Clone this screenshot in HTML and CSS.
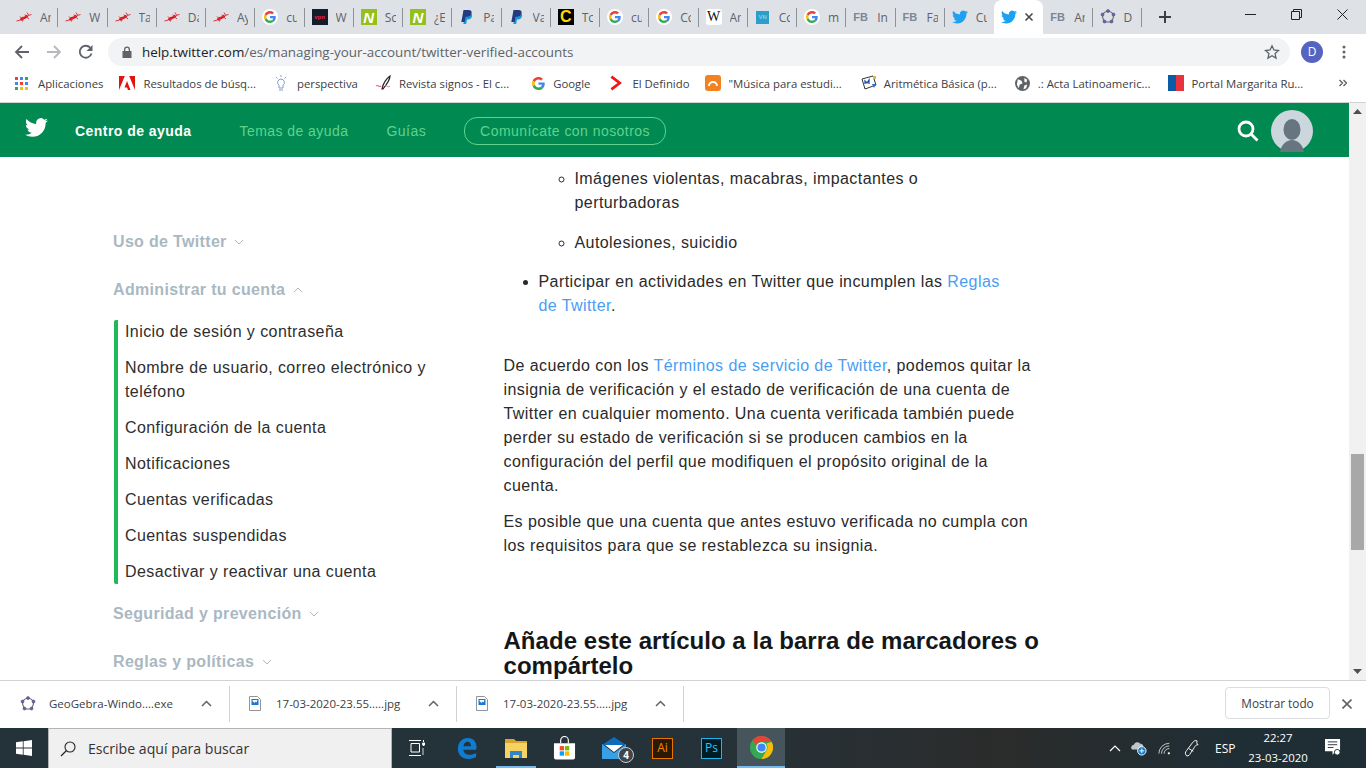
FILE: index.html
```html
<!DOCTYPE html>
<html lang="es">
<head>
    <meta charset="UTF-8">
    <meta name="viewport" content="width=device-width, initial-scale=1.0">
    <title>Cuentas verificadas</title>
    <link rel="stylesheet" href="styles.css">
</head>
<body>
    <svg class="defs" width="0" height="0">
        <symbol id="bird" viewBox="0 0 24 24"><path d="M23.953 4.57a10 10 0 01-2.825.775 4.958 4.958 0 002.163-2.723c-.951.555-2.005.959-3.127 1.184a4.92 4.92 0 00-8.384 4.482C7.69 8.095 4.067 6.13 1.64 3.162a4.822 4.822 0 00-.666 2.475c0 1.71.87 3.213 2.188 4.096a4.904 4.904 0 01-2.228-.616v.06a4.923 4.923 0 003.946 4.827 4.996 4.996 0 01-2.212.085 4.936 4.936 0 004.604 3.417 9.867 9.867 0 01-6.102 2.105c-.39 0-.779-.023-1.17-.067a13.995 13.995 0 007.557 2.209c9.053 0 13.998-7.496 13.998-13.985 0-.21 0-.42-.015-.63A9.935 9.935 0 0024 4.59z"/></symbol>
        <symbol id="gcolor" viewBox="0 0 48 48">
            <path fill="#ea4335" d="M24 9.5c3.54 0 6.71 1.22 9.21 3.6l6.85-6.85C35.9 2.38 30.47 0 24 0 14.62 0 6.51 5.38 2.56 13.22l7.98 6.19C12.43 13.72 17.74 9.5 24 9.5z"/>
            <path fill="#4285f4" d="M46.98 24.55c0-1.57-.15-3.09-.38-4.55H24v9.02h12.94c-.58 2.96-2.26 5.48-4.78 7.18l7.73 6c4.51-4.18 7.09-10.36 7.09-17.65z"/>
            <path fill="#fbbc05" d="M10.53 28.59c-.48-1.45-.76-2.99-.76-4.59s.27-3.14.76-4.59l-7.98-6.19C.92 16.46 0 20.12 0 24c0 3.88.92 7.54 2.56 10.78l7.97-6.19z"/>
            <path fill="#34a853" d="M24 48c6.48 0 11.93-2.13 15.89-5.81l-7.73-6c-2.15 1.45-4.92 2.3-8.16 2.3-6.26 0-11.57-4.22-13.47-9.91l-7.98 6.19C6.51 42.62 14.62 48 24 48z"/>
        </symbol>
        <symbol id="ant" viewBox="0 0 16 16">
            <path d="M4.500 11C5.500 10 6 9.500 7.500 9s2.500-.5 4-2.500" fill="none" stroke="#d8141c" stroke-width="2.400"/>
            <path d="M.5 12l4-1M4 7.500l2.500 2.500M6.500 12.500l1-4M9 5.500l1 2.500M13 10l-3-2.500M12 6.500l3.500-1M11 3.500l1.500 2.500" fill="none" stroke="#e0343a" stroke-width="1"/>
        </symbol>
        <symbol id="paypal" viewBox="0 0 16 16">
            <path fill="#179bd7" d="M6.500 5h6.200c1.200 1.800-.3 5.400-3.300 5.400H8L7.200 15H4.300z"/>
            <path fill="#253b80" d="M4.500 1h5c2.500 0 3.700 1.300 3 3.500-.6 2.400-2.500 3.300-4.500 3.300H6.500L5.700 13H2.300z"/>
        </symbol>
        <symbol id="geo" viewBox="0 0 16 16">
            <path d="M8 2c2 .3 4 1.300 5.500 3.500.3 2.500-.7 5-2 7-2.300.7-4.700.7-7 0-1.300-2-2.300-4.500-2-7C4 3.300 6 2.300 8 2z" fill="none" stroke="#666" stroke-width="1.100"/>
            <g fill="#6f63c4" stroke="#3d3d55" stroke-width=".5"><circle cx="8" cy="2" r="1.500"/><circle cx="13.500" cy="5.500" r="1.500"/><circle cx="11.500" cy="12.500" r="1.500"/><circle cx="4.500" cy="12.500" r="1.500"/><circle cx="2.500" cy="5.500" r="1.500"/></g>
        </symbol>
        <symbol id="jpgfile" viewBox="0 0 12 15">
            <path d="M.5.500h8l3 3v11H.5z" fill="#fff" stroke="#8f959b"/>
            <path d="M2.500 3h7v6h-7z" fill="#1976d2"/>
            <path d="M3.500 4h5l-1 2.500-1-1-.8 2-.7-2-1 1z" fill="#fff"/>
        </symbol>
    </svg>

    <!-- pestañas -->
    <div class="tabstrip">
        <div class="tab"><svg class="fav"><use href="#ant"/></svg><span class="tab-title">Ar</span></div>
        <div class="tab"><svg class="fav"><use href="#ant"/></svg><span class="tab-title">W</span></div>
        <div class="tab"><svg class="fav"><use href="#ant"/></svg><span class="tab-title">Ta</span></div>
        <div class="tab"><svg class="fav"><use href="#ant"/></svg><span class="tab-title">Da</span></div>
        <div class="tab"><svg class="fav"><use href="#ant"/></svg><span class="tab-title">Ay</span></div>
        <div class="tab"><span class="fav-g"><svg width="12" height="12"><use href="#gcolor"/></svg></span><span class="tab-title">cu</span></div>
        <div class="tab"><span class="fav-box fav-dark">vpn</span><span class="tab-title">W</span></div>
        <div class="tab"><span class="fav-box fav-n">N</span><span class="tab-title">Sc</span></div>
        <div class="tab"><span class="fav-box fav-n">N</span><span class="tab-title">¿E</span></div>
        <div class="tab"><svg class="fav"><use href="#paypal"/></svg><span class="tab-title">Pa</span></div>
        <div class="tab"><svg class="fav"><use href="#paypal"/></svg><span class="tab-title">Va</span></div>
        <div class="tab"><span class="fav-box fav-c">C</span><span class="tab-title">Tc</span></div>
        <div class="tab"><span class="fav-g"><svg width="12" height="12"><use href="#gcolor"/></svg></span><span class="tab-title">cu</span></div>
        <div class="tab"><span class="fav-g"><svg width="12" height="12"><use href="#gcolor"/></svg></span><span class="tab-title">Cc</span></div>
        <div class="tab"><span class="fav-box fav-w">W</span><span class="tab-title">Ar</span></div>
        <div class="tab"><span class="fav-box fav-vn">VN</span><span class="tab-title">Cc</span></div>
        <div class="tab"><span class="fav-g"><svg width="12" height="12"><use href="#gcolor"/></svg></span><span class="tab-title">m</span></div>
        <div class="tab"><span class="fav-fb">FB</span><span class="tab-title">In</span></div>
        <div class="tab"><span class="fav-fb">FB</span><span class="tab-title">Fa</span></div>
        <div class="tab tab-before-active"><svg class="fav fav-bird"><use href="#bird"/></svg><span class="tab-title">Cu</span></div>
        <div class="tab tab-active"><svg class="fav fav-bird"><use href="#bird"/></svg><svg class="tab-close" width="10" height="10" viewBox="0 0 10 10"><path d="M1.500 1.500l7 7M8.500 1.500l-7 7" stroke="#45494d" stroke-width="1.600"/></svg></div>
        <div class="tab"><span class="fav-fb">FB</span><span class="tab-title">Ar</span></div>
        <div class="tab"><svg class="fav"><use href="#geo"/></svg><span class="tab-title">D</span></div>
        <svg class="newtab" width="12" height="12" viewBox="0 0 12 12"><path d="M6 0v12M0 6h12" stroke="#3c4043" stroke-width="2"/></svg>
        <div class="winbtns">
            <svg width="11" height="11" viewBox="0 0 11 11"><path d="M0 5.500h11" stroke="#222"/></svg>
            <svg width="11" height="11" viewBox="0 0 11 11"><path d="M.5 2.500h8v8h-8zM2.500 2.500v-2h8v8h-2" fill="none" stroke="#222"/></svg>
            <svg width="11" height="11" viewBox="0 0 11 11"><path d="M.5.500l10 10M10.500.500l-10 10" stroke="#222"/></svg>
        </div>
    </div>

    <!-- barra de direcciones -->
    <div class="toolbar">
        <svg width="16" height="16" viewBox="0 0 16 16"><path d="M15 8H2M8 2L2 8l6 6" fill="none" stroke="#5f6368" stroke-width="1.800"/></svg>
        <svg width="16" height="16" viewBox="0 0 16 16"><path d="M1 8h13M8 2l6 6-6 6" fill="none" stroke="#b5b8bc" stroke-width="1.800"/></svg>
        <svg width="16" height="16" viewBox="0 0 16 16"><path d="M13.500 9.500A6 6 0 1 1 12.200 3.700" fill="none" stroke="#5f6368" stroke-width="1.800"/><path d="M14.500 1v6h-6z" fill="#5f6368"/></svg>
        <div class="omnibox">
            <svg width="10" height="12" viewBox="0 0 10 12"><path d="M2 5V3.500a3 3 0 0 1 6 0V5h1.500v7H.5V5z" fill="#5f6368"/><path d="M3.300 5V3.500a1.700 1.700 0 0 1 3.400 0V5z" fill="#f1f3f4"/></svg>
            <span class="url"><b>help.twitter.com</b>/es/managing-your-account/twitter-verified-accounts</span>
            <svg class="star" width="16" height="16" viewBox="0 0 16 16"><path d="M8 1.800l1.900 4.200 4.600.5-3.400 3.100.9 4.500L8 11.800l-4 2.300.9-4.500-3.400-3.100 4.600-.5z" fill="none" stroke="#5f6368" stroke-width="1.300"/></svg>
        </div>
        <span class="profile">D</span>
        <svg class="menu-dots" width="4" height="14" viewBox="0 0 4 14"><g fill="#5f6368"><circle cx="2" cy="2" r="1.500"/><circle cx="2" cy="7" r="1.500"/><circle cx="2" cy="12" r="1.500"/></g></svg>
    </div>

    <!-- marcadores -->
    <div class="bookmarks">
        <div class="bm bm-apps">
            <svg width="13" height="13" viewBox="0 0 13 13">
                <g fill="#ea4335"><rect width="3" height="3"/><rect x="5" y="5" width="3" height="3"/></g>
                <g fill="#4285f4"><rect x="5" width="3" height="3"/><rect y="5" width="3" height="3"/><rect x="10" y="5" width="3" height="3"/></g>
                <g fill="#34a853"><rect x="10" width="3" height="3"/><rect y="10" width="3" height="3"/></g>
                <g fill="#fbbc05"><rect x="5" y="10" width="3" height="3"/><rect x="10" y="10" width="3" height="3"/></g>
            </svg>Aplicaciones
        </div>
        <div class="bm bm-res">
            <svg width="16" height="16" viewBox="0 0 16 16"><path d="M0 1h5.800L0 15zM10.200 1H16v14zM8 6l3.500 9H9L8 12.500H5.500z" fill="#e1150f"/></svg>Resultados de búsq...
        </div>
        <div class="bm bm-per">
            <svg width="14" height="16" viewBox="0 0 14 16"><path d="M7 4a3.500 3.500 0 0 1 2 6.300V13H5v-2.700A3.500 3.500 0 0 1 7 4zM5 15h4M2 2l1.500 1.500M12 2l-1.500 1.500M7 0v2" fill="none" stroke="#7f9fc9"/></svg>perspectiva
        </div>
        <div class="bm bm-rev">
            <svg width="16" height="16" viewBox="0 0 16 16"><path d="M7 14C8 9 11 4 15 1c0 4-3 8-7 13z" fill="none" stroke="#222" stroke-width="1.200"/><path d="M1 11c2-2 3 2 5 0" fill="none" stroke="#d9707a" stroke-width="1.200"/><path d="M10 11c2-1 3 2 5 0" fill="none" stroke="#d9707a"/></svg>Revista signos - El c...
        </div>
        <div class="bm bm-goo">
            <svg width="13" height="13"><use href="#gcolor"/></svg>Google
        </div>
        <div class="bm bm-def">
            <svg width="12" height="16" viewBox="0 0 13 16"><path d="M1.500 1l9 7-9 7" fill="none" stroke="#f01616" stroke-width="3"/></svg>El Definido
        </div>
        <div class="bm bm-mus">
            <span class="bm-orange"><svg width="12" height="12" viewBox="0 0 12 12"><path d="M2 9a4 4 0 1 1 8 0" fill="none" stroke="#fff" stroke-width="2"/></svg></span>"Música para estudi...
        </div>
        <div class="bm bm-ari">
            <svg width="18" height="16" viewBox="0 0 18 16"><path d="M2 4l11-3 3 9-11 4z" fill="#fff" stroke="#333"/><path d="M5 9V6l2 2 2-3v4" fill="none" stroke="#2150a0" stroke-width="1.300"/><path d="M12 9h4l-2 4z" fill="#2b6cd1"/><path d="M13 1h3v3h-3z" fill="#d9b64a"/></svg>Aritmética Básica (p...
        </div>
        <div class="bm bm-act">
            <svg width="15" height="15" viewBox="0 0 16 16"><circle cx="8" cy="8" r="8" fill="#5f6368"/><path d="M3 3.500l4 1.500 1 3-3 1-1 4-2-4zM10 2l3 2-1 3-2-1zM10 10l3-1-1 4-3 1z" fill="#fff"/></svg>.: Acta Latinoameric...
        </div>
        <div class="bm bm-por">
            <span class="bm-flag"></span>Portal Margarita Ru...
        </div>
        <svg class="bm-more" width="8" height="8" viewBox="0 0 8 8"><path d="M.5 1L3.500 4 .5 7M4.500 1l3 3-3 3" fill="none" stroke="#5f6368" stroke-width="1.400"/></svg>
    </div>

    <!-- contenido de la página -->
    <div class="viewport">
        <div class="page">
            <header class="site-nav">
                <svg class="nav-bird" width="23" height="23"><use href="#bird"/></svg>
                <a class="nav-home">Centro de ayuda</a>
                <a class="nav-link nav-topics">Temas de ayuda</a>
                <a class="nav-link nav-guides">Guías</a>
                <a class="nav-pill">Comunícate con nosotros</a>
                <svg class="nav-search" width="22" height="22" viewBox="0 0 22 22"><circle cx="9" cy="9" r="7" fill="none" stroke="#fff" stroke-width="2.800"/><path d="M14 14l6.500 6.500" stroke="#fff" stroke-width="2.800"/></svg>
                <svg class="nav-avatar" width="42" height="42" viewBox="0 0 42 42"><circle cx="21" cy="21" r="21" fill="#ccd6dd"/><ellipse cx="21" cy="19.500" rx="8.500" ry="10.500" fill="#66757f"/><path d="M9 42c1-7 6-12 12-12s11 5 12 12a21 21 0 0 1-24 0z" fill="#66757f"/></svg>
            </header>

            <div class="columns">
                <aside class="sidebar">
                    <h4 class="side-title">Uso de Twitter <svg width="10" height="6" viewBox="0 0 10 6"><path d="M1 1l4 4 4-4" fill="none" stroke="#aab8c2"/></svg></h4>
                    <h4 class="side-title">Administrar tu cuenta <svg width="10" height="6" viewBox="0 0 10 6"><path d="M1 5l4-4 4 4" fill="none" stroke="#aab8c2"/></svg></h4>
                    <ul class="side-list">
                        <li>Inicio de sesión y contraseña</li>
                        <li>Nombre de usuario, correo electrónico y teléfono</li>
                        <li>Configuración de la cuenta</li>
                        <li>Notificaciones</li>
                        <li>Cuentas verificadas</li>
                        <li>Cuentas suspendidas</li>
                        <li>Desactivar y reactivar una cuenta</li>
                    </ul>
                    <h4 class="side-title side-after">Seguridad y prevención <svg width="10" height="6" viewBox="0 0 10 6"><path d="M1 1l4 4 4-4" fill="none" stroke="#aab8c2"/></svg></h4>
                    <h4 class="side-title">Reglas y políticas <svg width="10" height="6" viewBox="0 0 10 6"><path d="M1 1l4 4 4-4" fill="none" stroke="#aab8c2"/></svg></h4>
                </aside>

                <main class="article">
                    <ul class="outer">
                        <li class="no-mark">
                            <ul class="inner">
                                <li>Imágenes violentas, macabras, impactantes o perturbadoras</li>
                                <li>Autolesiones, suicidio</li>
                            </ul>
                        </li>
                        <li>Participar en actividades en Twitter que incumplen las <a>Reglas de Twitter</a>.</li>
                    </ul>
                    <p class="para-first">De acuerdo con los <a>Términos de servicio de Twitter</a>, podemos quitar la insignia de verificación y el estado de verificación de una cuenta de Twitter en cualquier momento. Una cuenta verificada también puede perder su estado de verificación si se producen cambios en la configuración del perfil que modifiquen el propósito original de la cuenta.</p>
                    <p>Es posible que una cuenta que antes estuvo verificada no cumpla con los requisitos para que se restablezca su insignia.</p>
                    <h2>Añade este artículo a la barra de marcadores o compártelo</h2>
                </main>
            </div>
        </div>

        <div class="scrollbar">
            <svg width="9" height="5" viewBox="0 0 9 5"><path d="M4.500 0L9 5H0z" fill="#505050"/></svg>
            <span class="thumb"></span>
            <svg width="9" height="5" viewBox="0 0 9 5"><path d="M4.500 5L9 0H0z" fill="#505050"/></svg>
        </div>
    </div>

    <!-- descargas -->
    <div class="downloads">
        <div class="dl">
            <svg class="dl-icon" width="16" height="16"><use href="#geo"/></svg>
            <span class="dl-name">GeoGebra-Windo....exe</span>
            <svg width="11" height="7" viewBox="0 0 11 7"><path d="M1 6l4.500-4.500L10 6" fill="none" stroke="#5f6368" stroke-width="1.500"/></svg>
        </div>
        <div class="dl dl-file">
            <svg class="dl-icon" width="12" height="15"><use href="#jpgfile"/></svg>
            <span class="dl-name">17-03-2020-23.55.....jpg</span>
            <svg width="11" height="7" viewBox="0 0 11 7"><path d="M1 6l4.500-4.500L10 6" fill="none" stroke="#5f6368" stroke-width="1.500"/></svg>
        </div>
        <div class="dl dl-file">
            <svg class="dl-icon" width="12" height="15"><use href="#jpgfile"/></svg>
            <span class="dl-name">17-03-2020-23.55.....jpg</span>
            <svg width="11" height="7" viewBox="0 0 11 7"><path d="M1 6l4.500-4.500L10 6" fill="none" stroke="#5f6368" stroke-width="1.500"/></svg>
        </div>
        <button class="show-all">Mostrar todo</button>
        <svg class="dl-close" width="10" height="10" viewBox="0 0 10 10"><path d="M.5.500l9 9M9.500.500l-9 9" stroke="#5f6368" stroke-width="1.600"/></svg>
    </div>

    <!-- barra de tareas -->
    <div class="taskbar">
        <div class="start"><svg width="16" height="16" viewBox="0 0 16 16"><path d="M0 2.300l6.800-1v6.300H0zM7.600 1.200L16 0v7.600H7.600zM0 8.400h6.800v6.300l-6.800-1zM7.600 8.400H16V16l-8.400-1.200z" fill="#fff"/></svg></div>
        <div class="search-box">
            <svg width="16" height="16" viewBox="0 0 16 16"><circle cx="10" cy="6" r="5" fill="none" stroke="#222" stroke-width="1.100"/><path d="M6.500 9.500L1 15" stroke="#222" stroke-width="1.200"/></svg>
            Escribe aquí para buscar
        </div>
        <div class="task"><svg width="16" height="16" viewBox="0 0 16 16"><path d="M2 3.500h8.500v8.500H2zM0 .5h12M0 15.500h12M14.500 0v2M14.500 4v2" fill="none" stroke="#fff"/><path d="M13.500 3h3v2h-3zM14 8v7" fill="#fff" stroke="#fff" stroke-width=".8"/></svg></div>
        <div class="task task-edge"><svg width="20" height="22" viewBox="0 0 22 24"><path d="M21 14H7c.3 3.500 3 5.500 7 5.500 2.500 0 5-.7 7-2v4.500c-2 1.200-5 2-8 2C5 24 1 19 1 13 1 6.500 5 1 12 1c6 0 9.500 4 9.500 10.500zM15.500 10c0-3-1.500-5-4-5-2.300 0-4 2-4.400 5z" fill="#0f7bd1"/></svg></div>
        <div class="task task-open"><svg width="22" height="20" viewBox="0 0 22 20"><path d="M0 1h9l2 2h11v4H0z" fill="#d9a52c"/><path d="M0 5h22v15H0z" fill="#f6d265"/><path d="M5 20v-7h12v7h-3v-3H8v3z" fill="#2c86c8"/></svg></div>
        <div class="task"><svg width="23" height="24" viewBox="0 0 24 24"><path d="M8 7V4a4 4 0 0 1 8 0v3" fill="none" stroke="#fff" stroke-width="1.200"/><path d="M1 7h22v15a2 2 0 0 1-2 2H3a2 2 0 0 1-2-2z" fill="#fff"/><rect x="7" y="10" width="4.500" height="4.500" fill="#f25022"/><rect x="12.500" y="10" width="4.500" height="4.500" fill="#7fba00"/><rect x="7" y="15.500" width="4.500" height="4.500" fill="#00a4ef"/><rect x="12.500" y="15.500" width="4.500" height="4.500" fill="#ffb900"/></svg></div>
        <div class="task task-mail">
            <svg width="24" height="22" viewBox="0 0 24 22"><path d="M0 8L12 0l12 8z" fill="#0f6cbd"/><path d="M3 8h18l-9 7z" fill="#fff"/><path d="M0 7l12 9 12-9v15H0z" fill="#38a0e6"/></svg>
            <span class="mail-badge">4</span>
        </div>
        <div class="task"><span class="adobe adobe-ai">Ai</span></div>
        <div class="task"><span class="adobe adobe-ps">Ps</span></div>
        <div class="task task-chrome">
            <svg width="23" height="23" viewBox="0 0 24 24"><circle cx="12" cy="12" r="12" fill="#34a853"/><path d="M12 0a12 12 0 0 1 10.400 6H12a6 6 0 0 0-5.500 3.500L2.600 4.500A12 12 0 0 1 12 0z" fill="#ea4335"/><path d="M22.400 6A12 12 0 0 1 12 24l5-8.700A6 6 0 0 0 17 8z" fill="#fbbc05"/><circle cx="12" cy="12" r="5.500" fill="#fff"/><circle cx="12" cy="12" r="4.300" fill="#4285f4"/></svg>
        </div>
        <div class="tray">
            <svg width="12" height="7" viewBox="0 0 12 7"><path d="M1 6l5-5 5 5" fill="none" stroke="#fff" stroke-width="1.200"/></svg>
            <svg class="tray-cloud" width="16" height="15" viewBox="0 0 17 16"><path d="M1 9a3 3 0 0 1 2-5 4 4 0 0 1 7-1 3 3 0 0 1 3 3v3z" fill="#c0c4c8"/><circle cx="11.500" cy="10.500" r="4.500" fill="#0f7bd1" stroke="#fff"/><path d="M9 10.500h5M11.500 8v5" stroke="#fff"/></svg>
            <svg class="tray-wifi" width="13" height="13" viewBox="0 0 15 14"><path d="M1 13A12 12 0 0 1 13 1M4 13a9 9 0 0 1 9-9M7 13a6 6 0 0 1 6-6" fill="none" stroke="#d8dadc"/><circle cx="12.500" cy="12.500" r="1.300" fill="#fff"/></svg>
            <svg class="tray-pen" width="16" height="18" viewBox="0 0 17 19"><path d="M4 18c-2-2-2-4 0-6l6-8c1.500-2 3-3 5-2-1 2 0 3 1 4-2 0-3 1-4 3l-4 6c-1 2-2 3-4 3zM6 10l5 3" fill="none" stroke="#fff"/></svg>
            <span class="tray-lang">ESP</span>
            <div class="clock"><span>22:27</span><span>23-03-2020</span></div>
            <svg class="tray-notif" width="16" height="18" viewBox="0 0 17 19"><path d="M0 0h16v13h-5l-3 4v-4H0z" fill="#fff"/><path d="M3 3h10M3 6h10M3 9h6" stroke="#263238"/><circle cx="13" cy="14" r="3" fill="#fff" stroke="#263238"/></svg>
        </div>
    </div>
</body>
</html>
```

FILE: styles.css
```css
* {
    box-sizing: border-box;
}

html, body {
    margin: 0;
    padding: 0;
}

body {
    width: 1366px;
    height: 768px;
    overflow: hidden;
    display: flex;
    flex-direction: column;
    font-family: "Open Sans", "Noto Sans", sans-serif;
    background-color: #fff;
    color: #3c4043;
}

.defs {
    position: absolute;
}

/* pestañas */
.tabstrip {
    height: 34px;
    flex: none;
    display: flex;
    align-items: center;
    padding-left: 9px;
    background-color: #dee1e6;
}

.tab {
    width: 49.25px;
    height: 34px;
    flex: none;
    display: flex;
    align-items: center;
    padding-left: 7px;
    position: relative;
    overflow: hidden;
}

.tab::after {
    content: "";
    position: absolute;
    right: 0;
    top: 8px;
    height: 19px;
    width: 1px;
    background-color: #8f9399;
}

.tab-before-active::after,
.tab-active::after {
    display: none;
}

.tab-active {
    background-color: #fff;
    border-radius: 8px 8px 0 0;
}

.tab-title {
    margin-left: 8px;
    width: 11px;
    overflow: hidden;
    white-space: nowrap;
    font-size: 12px;
    color: #5f6368;
}

.tab-close {
    margin-left: 7px;
}

.fav {
    width: 16px;
    height: 16px;
    flex: none;
}

.fav-bird {
    fill: #1da1f2;
}

.fav-g {
    width: 16px;
    height: 16px;
    flex: none;
    display: flex;
    align-items: center;
    justify-content: center;
    background-color: #fff;
    border-radius: 50%;
}

.fav-box {
    width: 16px;
    height: 16px;
    flex: none;
    display: flex;
    align-items: center;
    justify-content: center;
    font-family: "Liberation Sans", sans-serif;
    font-weight: bold;
}

.fav-dark {
    background-color: #151d2b;
    color: #e24;
    font-size: 6px;
}

.fav-n {
    background-color: #95bf1b;
    color: #fff;
    font-size: 15px;
    font-style: italic;
}

.fav-c {
    background-color: #000;
    color: #ffd800;
    font-size: 16px;
}

.fav-w {
    background-color: #fff;
    color: #111;
    font-family: "Liberation Serif", serif;
    font-weight: normal;
    font-size: 14px;
    border-radius: 3px;
}

.fav-vn {
    background-color: #2a9fc9;
    color: #7fd0ea;
    font-size: 6px;
    width: 13px;
    height: 13px;
    margin: 0 1.500px;
}

.fav-fb {
    width: 16px;
    flex: none;
    font-family: "Liberation Sans", sans-serif;
    font-size: 11px;
    font-weight: bold;
    color: #7b8794;
}

.newtab {
    margin-left: 17px;
    flex: none;
}

.winbtns {
    margin-left: auto;
    display: flex;
    align-items: center;
    gap: 35px;
    padding-right: 18px;
    margin-bottom: 6px;
}

/* barra de direcciones */
.toolbar {
    height: 32px;
    flex: none;
    display: flex;
    align-items: center;
    gap: 16px;
    padding: 4px 14px 0;
    background-color: #fff;
}

.omnibox {
    width: 1182px;
    height: 28px;
    margin-left: -2px;
    display: flex;
    align-items: center;
    padding: 0 10px 0 14px;
    background-color: #f1f3f4;
    border-radius: 14px;
}

.url {
    margin-left: 10px;
    font-size: 13.400px;
    color: #5f6368;
}

.url b {
    font-weight: normal;
    color: #202124;
}

.star {
    margin-left: auto;
}

.profile {
    width: 22px;
    height: 22px;
    margin-left: -5px;
    border-radius: 50%;
    background-color: #5563c1;
    color: #fff;
    font-size: 12px;
    line-height: 22px;
    text-align: center;
}

.menu-dots {
    margin-left: 3px;
}

/* marcadores */
.bookmarks {
    height: 37px;
    flex: none;
    display: flex;
    align-items: center;
    padding: 0 0 2px 15px;
    background-color: #fff;
    border-bottom: 1px solid #d0d2d4;
}

.bm {
    display: flex;
    align-items: center;
    gap: 8px;
    font-size: 11.350px;
    color: #3c4043;
    white-space: nowrap;
}

.bm-apps { gap: 10px; }
.bm-res { margin-left: 16px; }
.bm-per { margin-left: 18px; gap: 9px; }
.bm-rev { margin-left: 17px; }
.bm-goo { margin-left: 23px; }
.bm-def { margin-left: 20px; gap: 10px; }
.bm-mus { margin-left: 16px; gap: 7px; }
.bm-ari { margin-left: 18px; gap: 6px; }
.bm-act { margin-left: 18px; }
.bm-por { margin-left: 17px; }

.bm-orange {
    width: 16px;
    height: 16px;
    display: flex;
    align-items: center;
    justify-content: center;
    background-color: #f48120;
    border-radius: 3px;
}

.bm-flag {
    width: 16px;
    height: 16px;
    background: linear-gradient(to right, #0c5ba7 50%, #e8323c 50%);
}

.bm-more {
    margin-left: auto;
    margin-right: 19px;
}

/* página */
.viewport {
    flex: 1;
    min-height: 0;
    display: flex;
    overflow: hidden;
}

.page {
    flex: 1;
    min-width: 0;
    font-family: "Liberation Sans", Arial, sans-serif;
}

.site-nav {
    height: 54px;
    display: flex;
    align-items: center;
    padding: 2px 0 0 25px;
    background-color: #008a52;
    fill: #fff;
    font-size: 14px;
    letter-spacing: .45px;
}

.nav-bird {
    margin-bottom: 8px;
}

.nav-home {
    margin-left: 27px;
    font-weight: bold;
    color: #fff;
}

.nav-link {
    color: #5fd38d;
}

.nav-topics {
    margin-left: 48px;
}

.nav-guides {
    margin-left: 38px;
}

.nav-pill {
    margin-left: 38px;
    padding: 5px 15px;
    border: 1px solid #5fd38d;
    border-radius: 13px;
    color: #5fd38d;
}

.nav-search {
    margin-left: auto;
}

.nav-avatar {
    margin: 0 36px 0 12px;
}

.columns {
    display: flex;
    padding-left: 113px;
}

.sidebar {
    width: 390.500px;
    flex: none;
    padding-top: 76px;
    padding-right: 70px;
}

.side-title {
    margin: 0 0 30px;
    line-height: 18px;
    font-size: 16px;
    font-weight: bold;
    color: #aab8c2;
    letter-spacing: .33px;
}

.side-title svg {
    margin-left: 3px;
    vertical-align: 2px;
}

.side-list {
    list-style: none;
    margin: -9px 0 0 1px;
    padding: 0 0 0 7px;
    border-left: 4px solid #1fba57;
    border-radius: 2px;
    display: flex;
    flex-direction: column;
    gap: 12px;
    font-size: 16px;
    line-height: 24px;
    color: #2e2e2e;
    letter-spacing: .42px;
}

.side-after {
    margin-top: 21px;
}

.article {
    width: 536px;
    flex: none;
    font-size: 16px;
    line-height: 24px;
    color: #2a2a2a;
    letter-spacing: .42px;
}

.article a {
    color: #4a9df2;
}

.article ul {
    margin: 0;
    padding: 0;
}

.outer {
    padding-left: 35px !important;
    padding-right: 30px !important;
    padding-top: 10px !important;
}

.outer > li {
    margin-bottom: 16px;
}

.outer > .no-mark {
    margin-bottom: 15px;
}

.no-mark {
    list-style: none;
}

.inner {
    padding-left: 36px !important;
    list-style-type: circle;
}

.inner li {
    margin-bottom: 16px;
}

.inner li:last-child {
    margin-bottom: 15px;
}

.article p {
    margin: 0 0 12px;
}

.article .para-first {
    margin-top: 36px;
}

.article h2 {
    margin: 70px 0 0;
    font-size: 24px;
    line-height: 25px;
    color: #14171a;
    letter-spacing: .04px;
}

.scrollbar {
    width: 17px;
    flex: none;
    background-color: #f1f1f1;
    display: flex;
    flex-direction: column;
    align-items: center;
    padding: 6px 0;
    position: relative;
}

.scrollbar svg:last-child {
    margin-top: auto;
}

.thumb {
    position: absolute;
    top: 351px;
    left: 2px;
    width: 13px;
    height: 96px;
    background-color: #a8a8a8;
}

/* descargas */
.downloads {
    height: 48px;
    flex: none;
    display: flex;
    align-items: center;
    padding-bottom: 2px;
    background-color: #fff;
    border-top: 1px solid #d0d2d4;
}

.dl {
    height: 45px;
    display: flex;
    align-items: center;
    flex: none;
    width: 230px;
    padding-left: 20px;
    font-size: 11.500px;
    position: relative;
}

.dl-file {
    width: 227px;
    padding-left: 19px;
}

.dl::after {
    content: "";
    position: absolute;
    right: 0;
    top: 5px;
    bottom: 4px;
    width: 1px;
    background-color: #d0d2d4;
}

.dl-icon {
    flex: none;
}

.dl-name {
    margin-left: 13px;
    width: 132px;
    white-space: nowrap;
    color: #3c4043;
}

.dl-file .dl-name {
    margin-left: 15px;
}

.dl > svg:last-child {
    margin-left: 20px;
}

.show-all {
    margin: -1px 0 0 auto;
    width: 105px;
    height: 32px;
    padding: 0;
    background-color: #fff;
    border: 1px solid #dadce0;
    border-radius: 4px;
    font-family: inherit;
    font-size: 11.800px;
    color: #3c4043;
}

.dl-close {
    margin: 0 14px 0 12px;
}

/* barra de tareas */
.taskbar {
    height: 40px;
    flex: none;
    display: flex;
    align-items: stretch;
    background: linear-gradient(to right, #24323a 0, #25323a 50%, #2b2c2b 74%, #1f2e35 90%);
    color: #fff;
}

.start {
    width: 48px;
    display: flex;
    align-items: center;
    justify-content: center;
}

.search-box {
    width: 344px;
    display: flex;
    align-items: center;
    gap: 12px;
    padding-left: 11px;
    background-color: #f0f0f0;
    border: 1px solid #b4b4b4;
    border-bottom: 0;
    color: #333;
    font-size: 14.100px;
}

.task {
    width: 49px;
    display: flex;
    align-items: center;
    justify-content: center;
    position: relative;
}

.task-edge {
    margin-left: 1px;
}

.task-open::after {
    content: "";
    position: absolute;
    left: 5px;
    bottom: 0;
    width: 40px;
    height: 2px;
    background-color: #76b9ed;
}

.task-chrome {
    margin-left: 1px;
    width: 48px;
    background-color: #46545c;
    border-bottom: 2px solid #76b9ed;
}

.mail-badge {
    position: absolute;
    left: 29px;
    top: 19px;
    width: 16px;
    height: 16px;
    border-radius: 50%;
    background-color: #3e464c;
    border: 1px solid #ccc;
    font-size: 10px;
    font-weight: bold;
    line-height: 14px;
    text-align: center;
}

.adobe {
    width: 21px;
    height: 21px;
    display: block;
    border-width: 1.500px;
    border-style: solid;
    background-color: #2a1a05;
    font-size: 12px;
    line-height: 18px;
    text-align: center;
}

.adobe-ai {
    border-color: #e87500;
    color: #f08a00;
}

.adobe-ps {
    border-color: #20b5f0;
    color: #31c5f4;
    background-color: #001d26;
}

.tray {
    margin-left: auto;
    display: flex;
    align-items: center;
    font-size: 12px;
    padding-right: 25px;
}

.tray-cloud { margin-left: 10px; }
.tray-wifi { margin-left: 11px; }
.tray-pen { margin-left: 12px; }
.tray-lang { margin-left: 16px; width: 19px; }

.clock {
    margin-left: 15px;
    width: 58px;
    display: flex;
    flex-direction: column;
    align-items: center;
    line-height: 20px;
    font-size: 11.400px;
    white-space: nowrap;
}

.tray-notif {
    margin-left: 18px;
}
```
